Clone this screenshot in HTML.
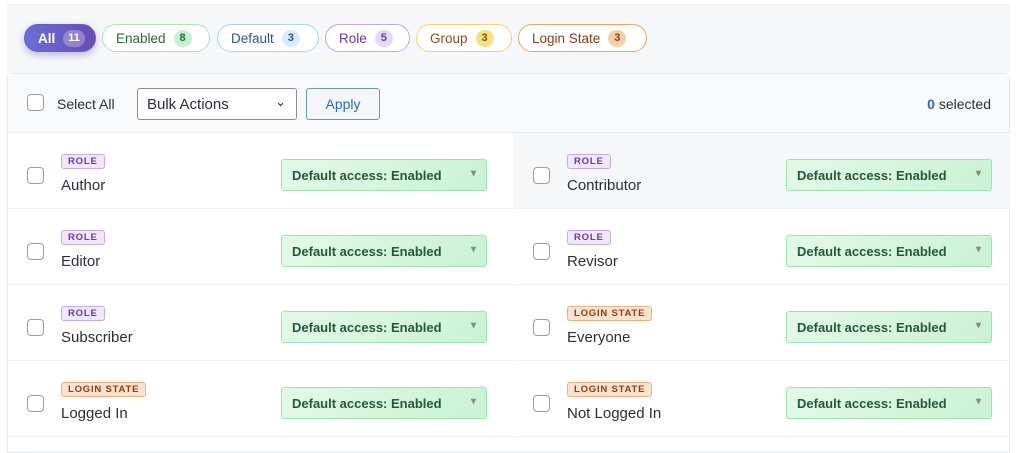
<!DOCTYPE html><html><head><style>
*{box-sizing:border-box;margin:0;padding:0}
body{width:1024px;height:450px;background:#fff;font-family:"Liberation Sans",sans-serif;position:relative;overflow:hidden;color:#1e2330}
.top{position:absolute;left:7px;top:4px;width:1003px;height:69px;background:#f6f7f9;border-top:1px solid #eef0f4}
.pill{position:absolute;top:24px;height:28px;border-radius:14px;border:1.5px solid;background:#fff;font-size:13.5px;display:flex;align-items:center;padding-left:13px}
.pill b{display:inline-block;margin-left:8px;height:17px;min-width:18px;padding:0 5px;border-radius:9px;font-size:11px;line-height:17px;text-align:center}
.panel{position:absolute;left:7px;top:73px;width:1003px;height:380px;border:1px solid #e4e7ec;border-radius:6px 6px 0 0;background:#fff}
.tb{position:absolute;left:0;top:0;width:100%;height:59px;background:#f8f9fb;border-bottom:1px solid #e6e9ee}
.cb{position:absolute;width:17px;height:17px;border:1.5px solid #9a9da3;border-radius:4px;background:#fff}
.row{position:absolute;height:76px;border-bottom:1px solid #eef0f3}
.tag{position:absolute;top:21px;height:15px;padding:0 6px;font-size:9.5px;font-weight:bold;letter-spacing:.8px;line-height:13px;border:1px solid;border-radius:3px}
.role{background:#f1e8ff;color:#6b35b8;border-color:#c9a8f2}
.ls{background:#fde3cf;color:#8a3e12;border-color:#f2b07f}
.nm{position:absolute;top:44px;font-size:15px;color:#2b2f3a}
.dd{position:absolute;top:26px;width:206px;height:32px;background:linear-gradient(135deg,#e3f9e8,#c9f2d3);border:1px solid #9fe2b0;border-radius:3px;font-size:13px;font-weight:bold;color:#245a35;padding:8px 0 0 10px}
.dd:after{content:"▾";position:absolute;right:10px;top:8px;font-size:10px;color:#888}
</style></head><body>
<div class="top"></div>
<div class="pill" style="left:24px;width:72px;background:linear-gradient(90deg,#6a6fd6,#6b4bb2);border-color:#6a5cc6;color:#fff;font-weight:bold;box-shadow:0 3px 8px rgba(100,90,210,.4)">All<b style="background:rgba(255,255,255,.28)">11</b></div>
<div class="pill" style="left:102px;width:108px;border-color:#a9e6b7;color:#276b3b">Enabled<b style="background:#c6f0d0">8</b></div>
<div class="pill" style="left:217px;width:102px;border-color:#a9d6f2;color:#2d5a82">Default<b style="background:#d9ecfb">3</b></div>
<div class="pill" style="left:325px;width:85px;border-color:#c3a4ee;color:#6b35b8">Role<b style="background:#e6d8fb">5</b></div>
<div class="pill" style="left:416px;width:96px;border-color:#f2d279;color:#8a4e16">Group<b style="background:#f7df86">3</b></div>
<div class="pill" style="left:518px;width:129px;border-color:#eda46e;color:#8a3e12">Login State<b style="background:#f6cfa9">3</b></div>
<div class="panel">
<div class="tb">
<div class="cb" style="left:19px;top:20px"></div>
<div style="position:absolute;left:49px;top:22px;font-size:14px;color:#2b2f3a">Select All</div>
<div style="position:absolute;left:129px;top:14px;width:160px;height:32px;border:1px solid #8c8f94;border-radius:3px;background:#fff;font-size:15px;padding:7px 9px;color:#2b2f3a">Bulk Actions<span style="position:absolute;right:10px;top:5px;font-size:13px">&#8964;</span></div>
<div style="position:absolute;left:298px;top:14px;width:74px;height:32px;border:1px solid #6b94c9;border-radius:3px;background:#f4f7fb;font-size:14px;color:#2d6bb5;text-align:center;line-height:30px">Apply</div>
<div style="position:absolute;right:18px;top:22px;font-size:14px;color:#2b2f3a"><b style="color:#3a5bd6">0</b> selected</div>
</div>
</div>
<div id="rows"></div>
<script>
var d=[["ROLE","role","Author"],["ROLE","role","Contributor"],["ROLE","role","Editor"],["ROLE","role","Revisor"],["ROLE","role","Subscriber"],["LOGIN STATE","ls","Everyone"],["LOGIN STATE","ls","Logged In"],["LOGIN STATE","ls","Not Logged In"]];
var h="";d.forEach(function(r,i){var c=i%2,t=133+Math.floor(i/2)*76,l=c?513:8,w=c?497:504;
h+='<div class="row" style="left:'+l+'px;top:'+t+'px;width:'+w+'px;'+(i==1?'background:#f6f7f9':'')+'"><div class="cb" style="left:'+(c?20:19)+'px;top:34px"></div><div class="tag '+r[1]+'" style="left:'+(c?54:53)+'px">'+r[0]+'</div><div class="nm" style="left:'+(c?54:53)+'px">'+r[2]+'</div><div class="dd" style="left:273px"></div></div>';});
document.getElementById("rows").innerHTML=h;
document.querySelectorAll(".dd").forEach(function(e){e.textContent="Default access: Enabled"});
</script>
</body></html>
